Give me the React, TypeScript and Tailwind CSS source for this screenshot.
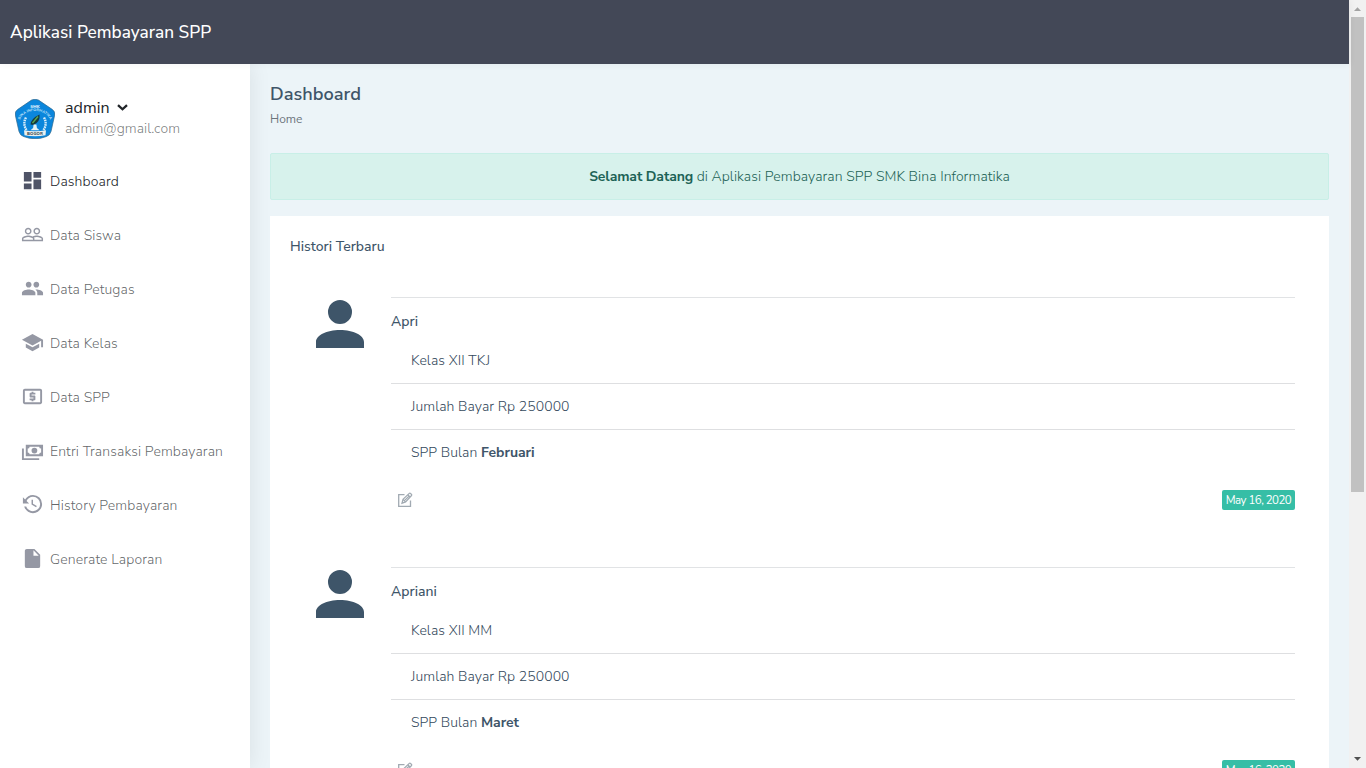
import type { ReactNode } from "react";

const iconPaths = {
  dashboard: "M13,3V9H21V3M13,21H21V11H13M3,21H11V15H3M3,13H11V3H3V13Z",
  peopleOutline:
    "M16.5 13c-1.2 0-3.07.34-4.5 1-1.43-.67-3.3-1-4.5-1C5.33 13 1 14.08 1 16.25V19h22v-2.75c0-2.17-4.33-3.25-6.5-3.25zm-4 4.5h-10v-1.25c0-.54 2.56-1.75 5-1.75s5 1.21 5 1.75v1.25zm9 0H14v-1.25c0-.46-.2-.86-.52-1.22.88-.3 1.96-.53 3.02-.53 2.44 0 5 1.21 5 1.75v1.25zM7.5 12c1.93 0 3.5-1.57 3.5-3.5S9.43 5 7.5 5 4 6.57 4 8.5 5.57 12 7.5 12zm0-5.5c1.1 0 2 .9 2 2s-.9 2-2 2-2-.9-2-2 .9-2 2-2zm9 5.5c1.93 0 3.5-1.57 3.5-3.5S18.43 5 16.5 5 13 6.57 13 8.5s1.57 3.5 3.5 3.5zm0-5.5c1.1 0 2 .9 2 2s-.9 2-2 2-2-.9-2-2 .9-2 2-2z",
  people:
    "M16 11c1.66 0 2.99-1.34 2.99-3S17.66 5 16 5c-1.66 0-3 1.34-3 3s1.34 3 3 3zm-8 0c1.66 0 2.99-1.34 2.99-3S9.66 5 8 5C6.34 5 5 6.34 5 8s1.34 3 3 3zm0 2c-2.33 0-7 1.17-7 3.5V19h14v-2.5c0-2.33-4.67-3.5-7-3.5zm8 0c-.29 0-.62.02-.97.05 1.16.84 1.97 1.97 1.97 3.45V19h6v-2.5c0-2.33-4.67-3.5-7-3.5z",
  school: "M5 13.18v4L12 21l7-3.82v-4L12 17l-7-3.82zM12 3L1 9l11 6 9-4.91V17h2V9L12 3z",
  localAtm:
    "M11 17h2v-1h1c.55 0 1-.45 1-1v-3c0-.55-.45-1-1-1h-3v-1h4V8h-2V7h-2v1h-1c-.55 0-1 .45-1 1v3c0 .55.45 1 1 1h3v1H9v2h2v1zm9-13H4c-1.11 0-1.99.89-1.99 2L2 18c0 1.11.89 2 2 2h16c1.11 0 2-.89 2-2V6c0-1.11-.89-2-2-2zm0 14H4V6h16v12z",
  cash: "M5,6H23V18H5V6M14,9A3,3 0 0,1 17,12A3,3 0 0,1 14,15A3,3 0 0,1 11,12A3,3 0 0,1 14,9M9,8A2,2 0 0,1 7,10V14A2,2 0 0,1 9,16H19A2,2 0 0,1 21,14V10A2,2 0 0,1 19,8H9M1,10H3V20H19V22H1V10Z",
  history:
    "M11,7V12.11L15.71,14.9L16.5,13.62L12.5,11.25V7M12.5,2C8.97,2 5.91,3.92 4.27,6.77L2,4.5V11H8.5L5.75,8.25C6.96,5.73 9.5,4 12.5,4A7.5,7.5 0 0,1 20,11.5A7.5,7.5 0 0,1 12.5,19C9.23,19 6.47,16.91 5.44,14H3.34C4.44,18.03 8.11,21 12.5,21C17.74,21 22,16.75 22,11.5A9.5,9.5 0 0,0 12.5,2Z",
  file: "M13,9V3.5L18.5,9M6,2C4.89,2 4,2.89 4,4V20A2,2 0 0,0 6,22H18A2,2 0 0,0 20,20V8L14,2H6Z",
  account:
    "M12,4A4,4 0 0,1 16,8A4,4 0 0,1 12,12A4,4 0 0,1 8,8A4,4 0 0,1 12,4M12,14C16.42,14 20,15.79 20,18V20H4V18C4,15.79 7.58,14 12,14Z",
};

type IconName = keyof typeof iconPaths;

function Icon({ name, className }: { name: IconName; className: string }) {
  return (
    <svg viewBox="0 0 24 24" fill="currentColor" fillRule={name === "cash" ? "evenodd" : "nonzero"} className={className}>
      <path d={iconPaths[name]} />
    </svg>
  );
}

const menu: { label: string; icon: IconName; active?: boolean }[] = [
  { label: "Dashboard", icon: "dashboard", active: true },
  { label: "Data Siswa", icon: "peopleOutline" },
  { label: "Data Petugas", icon: "people" },
  { label: "Data Kelas", icon: "school" },
  { label: "Data SPP", icon: "localAtm" },
  { label: "Entri Transaksi Pembayaran", icon: "cash" },
  { label: "History Pembayaran", icon: "history" },
  { label: "Generate Laporan", icon: "file" },
];

const payments = [
  { name: "Apri", kelas: "XII TKJ", amount: "250000", month: "Februari", date: "May 16, 2020" },
  { name: "Apriani", kelas: "XII MM", amount: "250000", month: "Maret", date: "May 16, 2020" },
];

function SchoolLogo() {
  return (
    <svg viewBox="0 0 40 40" className="size-10 shrink-0">
      <defs>
        <path id="logo-arc" d="M5 21 C9 9 31 9 35 21" />
      </defs>
      <path
        d="M16.5 1.1Q20 -.7 23.5 1.1L37.5 10.6Q40.4 12.8 39.7 16L36 32.5Q35 36.2 31.5 37.5Q20 42 8.5 37.5Q5 36.2 4 32.5L.3 16Q-.4 12.8 2.5 10.6Z"
        fill="#0b86dc"
        stroke="#31688c"
        strokeWidth=".7"
      />
      <text x="20" y="8.6" textAnchor="middle" fontSize="4.2" fontWeight="800" fill="#e8f5ff">SMK</text>
      <text fontSize="3.7" fontWeight="700" fill="#c5e4fa">
        <textPath href="#logo-arc" startOffset="50%" textAnchor="middle">BINA INFORMATIKA</textPath>
      </text>
      <path d="M11 18.5Q7.5 25 11.5 31M29 18.5Q32.5 25 28.5 31" fill="none" stroke="#d6ecf9" strokeWidth="2.4" strokeDasharray="1.6 .7" />
      <path d="M15.5 25.5Q16 19.5 24.5 15.5Q25.5 22.5 18.5 26Z" fill="#173b3d" />
      <path d="M17.5 24L23 17.5" stroke="#5aa750" strokeWidth="1.4" />
      <path d="M18.6 25.5h2.8l.5 3.5 2.6 2.2h-9l2.6-2.2z" fill="#e8f3f7" />
      <path d="M9 31.3Q20 33 31 31.3L30.5 36.3Q20 38 9.5 36.3Z" fill="#e9efef" />
      <text x="20" y="36.2" textAnchor="middle" fontSize="4.2" fontWeight="700" fill="#26343b">BOGOR</text>
    </svg>
  );
}

function EditIcon() {
  return (
    <svg viewBox="0 0 16 16" fill="none" stroke="currentColor" className="size-4">
      <path d="M7.5 2.6H1.7v11.7h11.8V8.5" strokeWidth="1.3" />
      <path d="M5 11.2l1-3.8L12 1.6q.9-.8 1.7 0l.6.6q.8.8 0 1.6L8.6 9.9zM6 7.4l2.6 2.5M10.8 2.8l2.5 2.4M7.4 8.6l4.6-4.5" strokeWidth="1.25" />
    </svg>
  );
}

function DetailRow({ children, divided }: { children: ReactNode; divided?: boolean }) {
  return (
    <div className={divided ? "h-[46px] border-b border-[#dedfe1] pt-3 pl-5" : "h-[46px] pt-3 pl-5"}>
      {children}
    </div>
  );
}

export default function App() {
  return (
    <div className="flex h-screen overflow-hidden bg-[#ecf4f8] font-['Nunito_Sans',Nunito,'Open_Sans',sans-serif] text-sm leading-[21px] font-light tracking-[0.07px] text-[#34495c]">
      <div className="flex min-w-0 flex-1 flex-col">
        <header className="relative z-20 flex h-16 shrink-0 items-center bg-[#434857] px-2.5 shadow-[1px_0_7px_rgba(0,0,0,0.05)]">
          <span className="text-[17.2px] font-medium tracking-[0.04px] text-white">Aplikasi Pembayaran SPP</span>
        </header>

        <div className="flex min-h-0 flex-1">
          <aside className="relative z-10 w-[250px] shrink-0 bg-white shadow-[1px_0_20px_rgba(0,0,0,0.08)]">
            <div className="flex gap-2.5 pt-[35px] pl-[15px]">
              <SchoolLogo />
              <div>
                <div className="flex h-[18px] items-center gap-[7px] text-base font-normal tracking-[0.1px] text-[#212529]">
                  admin
                  <svg viewBox="0 0 11 7" className="mb-0.5 h-[7px] w-[11px]">
                    <path d="M1 1.1l4.5 4.2L10 1.1" fill="none" stroke="currentColor" strokeWidth="2.3" />
                  </svg>
                </div>
                <div className="mt-px tracking-[0.04px] text-[#212529]/60">admin@gmail.com</div>
              </div>
            </div>
            <nav className="mt-[15px]">
              {menu.map((item) => (
                <a key={item.label} className="flex h-[54px] items-center gap-1.5 pl-[21px]">
                  <Icon
                    name={item.icon}
                    className={item.active ? "mb-px size-[23px] text-[#4f5467]" : "mb-px size-[23px] text-[#9598a4]"}
                  />
                  <span className={item.active ? "tracking-[0.12px] text-[#212529]" : "tracking-[0.11px] text-[#212529]/70"}>
                    {item.label}
                  </span>
                </a>
              ))}
            </nav>
          </aside>

          <main className="min-w-0 flex-1 overflow-hidden px-5 pt-[17px]">
            <h1 className="text-[18.2px] leading-[27px] font-semibold tracking-normal text-[#3e5569]">Dashboard</h1>
            <div className="mt-0.5 text-xs leading-[18px] font-normal tracking-normal text-[#6c757d]">Home</div>

            <div className="mt-[25px] flex h-[47px] items-center justify-center rounded-[2px] border border-[#c8efe7] bg-[#d7f2ec] text-[#1d6356]">
              <span>
                <b className="font-bold tracking-[-0.12px]">Selamat Datang</b> di Aplikasi Pembayaran SPP SMK Bina Informatika
              </span>
            </div>

            <section className="mt-4 h-[900px] bg-white px-5 pt-5">
              <h2 className="font-medium tracking-[0.02px] text-[#3e5569]">Histori Terbaru</h2>
              <div className="mt-[31px]">
                {payments.map((p) => (
                  <article key={p.name} className="flex h-[270px] px-3.5">
                    <Icon name="account" className="size-[72px] shrink-0 text-[#3e5569]" />
                    <div className="mt-[9px] ml-[15px] h-[214px] flex-1 border-t border-[#e1e3e5] pt-[13px]">
                      <h3 className="mb-1.5 font-medium tracking-[0.02px] text-[#3e5569]">{p.name}</h3>
                      <DetailRow divided>Kelas {p.kelas}</DetailRow>
                      <DetailRow divided>Jumlah Bayar Rp {p.amount}</DetailRow>
                      <DetailRow>
                        SPP Bulan <b className="font-bold tracking-[-0.05px] text-[#3e5569]">{p.month}</b>
                      </DetailRow>
                      <div className="mt-[14px] flex items-center justify-between pl-1.5">
                        <span className="text-[#a1aab2]">
                          <EditIcon />
                        </span>
                        <span className="flex h-5 w-[73px] items-center justify-center rounded-[2px] bg-[#36bea6] text-[11.5px] font-normal tracking-[-0.52px] text-white">
                          {p.date}
                        </span>
                      </div>
                    </div>
                  </article>
                ))}
              </div>
            </section>
          </main>
        </div>
      </div>

      <div className="flex w-[17px] shrink-0 flex-col items-center bg-[#f1f1f1]">
        <svg viewBox="0 0 17 17" className="size-[17px] shrink-0">
          <path d="M5 11h7L8.5 7.2z" fill="#a3a3a3" />
        </svg>
        <div className="mr-px h-[475px] w-[13px] bg-[#c1c1c1]" />
        <svg viewBox="0 0 17 17" className="mt-auto size-[17px] shrink-0">
          <path d="M5 6h7L8.5 9.8z" fill="#505050" />
        </svg>
      </div>
    </div>
  );
}
